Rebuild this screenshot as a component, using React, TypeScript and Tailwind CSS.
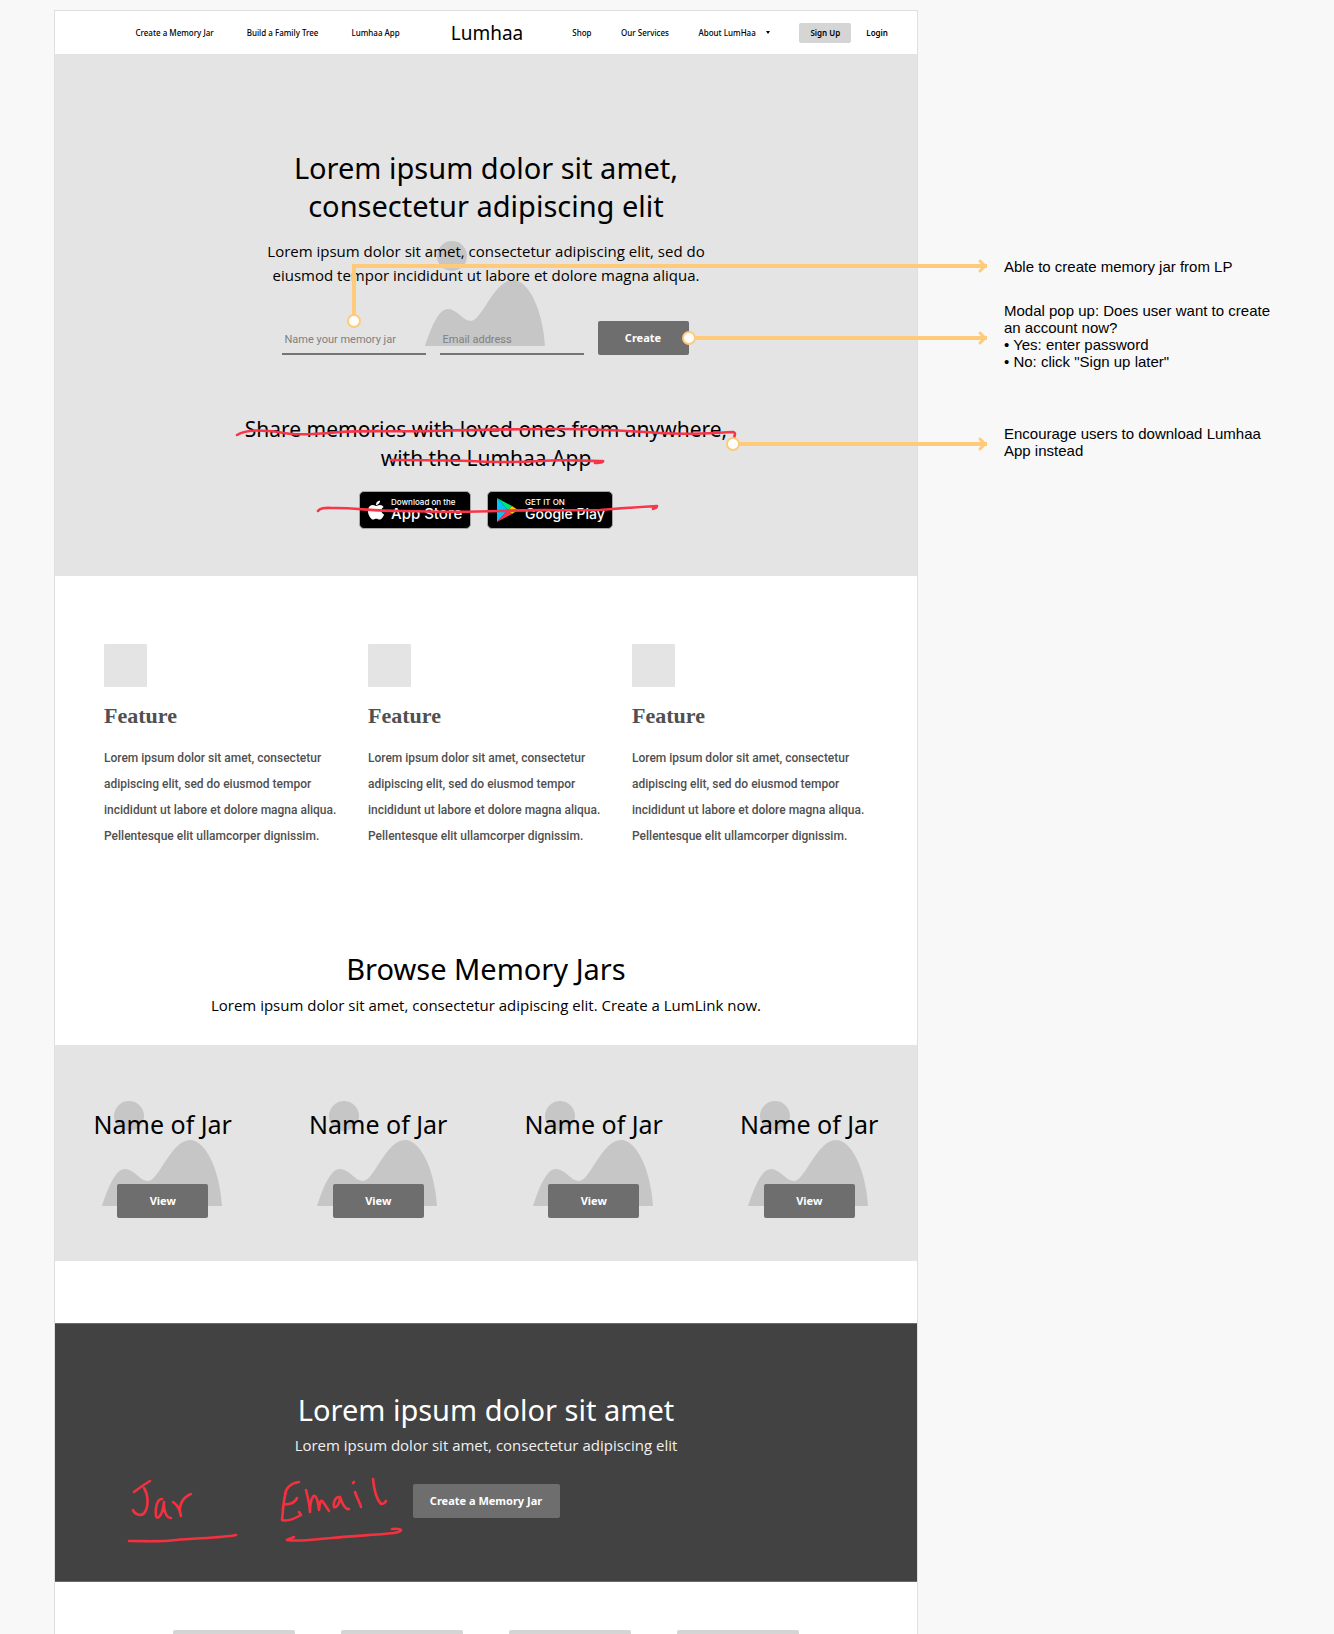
import React from "react";
import { FaApple } from "react-icons/fa";

function Placeholder({ className }: { className: string }) {
  return (
    <svg
      viewBox="0 0 120 105"
      className={`pointer-events-none absolute left-[calc(50%-61px)] h-[105px] w-[120px] fill-[#c6c6c6] ${className}`}
      aria-hidden="true"
    >
      <circle cx="27" cy="15" r="15" />
      <path d="M0 105C7 84 14 68 23 68C32 68 38 80 46 80C57 80 69 39 88 39C104 39 118 70 120 105Z" />
    </svg>
  );
}

function Dot({ className }: { className: string }) {
  return (
    <span
      className={`absolute size-[14px] rounded-full border-2 border-[#ffca79] bg-white ${className}`}
    />
  );
}

function Connector({ className }: { className: string }) {
  return (
    <span className={`absolute flex h-4 items-center ${className}`} aria-hidden="true">
      <span className="h-1 flex-1 bg-[#ffca79]" />
      <svg viewBox="0 0 8 16" className="-ml-2 h-4 w-2 overflow-visible">
        <path
          d="M1 3L6 8L1 13"
          fill="none"
          stroke="#ffca79"
          strokeWidth="3"
          strokeLinecap="round"
          strokeLinejoin="round"
        />
      </svg>
    </span>
  );
}

function PlayLogo() {
  return (
    <svg viewBox="0 0 22 24" className="h-6 w-[22px]" aria-hidden="true">
      <path d="M1 0L12 12L1 24Z" fill="#00c3ff" />
      <path d="M1 0L16 8L12 12Z" fill="#00e676" />
      <path d="M1 24L16 16L12 12Z" fill="#f93647" />
      <path d="M16 8L22 12L16 16L12 12Z" fill="#ffc400" />
    </svg>
  );
}

function Header() {
  return (
    <header className="flex h-[43px] items-center bg-white text-[8px] leading-3 font-medium text-black">
      <nav className="flex flex-1 justify-end gap-[33px] pr-[51px] pl-[29px] whitespace-nowrap">
        <a href="#jar">Create a Memory Jar</a>
        <a href="#tree">Build a Family Tree</a>
        <a href="#app">Lumhaa App</a>
      </nav>
      <a href="#home" className="text-[19px] leading-7 font-normal">
        Lumhaa
      </a>
      <nav className="flex flex-1 items-center justify-between pr-[29px] pl-[49px] whitespace-nowrap">
        <a href="#shop">Shop</a>
        <a href="#services">Our Services</a>
        <a href="#about" className="flex items-center gap-[10px]">
          About LumHaa
          <svg viewBox="0 0 4 3" className="h-[3px] w-1" aria-hidden="true">
            <path d="M0 0H4L2 3Z" />
          </svg>
        </a>
        <span className="flex items-center gap-[15px] font-semibold">
          <button type="button" className="h-5 w-[52px] rounded-[2px] bg-[#d5d5d5]">
            Sign Up
          </button>
          <a href="#login">Login</a>
        </span>
      </nav>
    </header>
  );
}

function Hero() {
  return (
    <section className="relative bg-[#e4e4e4] pt-[95px] pb-[47px] text-center text-black">
      <Placeholder className="top-[187px]" />
      <div className="relative">
        <h1 className="text-[29px] leading-[38px]">
          Lorem ipsum dolor sit amet,
          <br />
          consectetur adipiscing elit
        </h1>
        <p className="mt-[14px] font-['Open_Sans',sans-serif] text-[15px] leading-6">
          Lorem ipsum dolor sit amet, consectetur adipiscing elit, sed do
          <br />
          eiusmod tempor incididunt ut labore et dolore magna aliqua.
        </p>
        <form className="mt-[34px] flex justify-center gap-[14px] pr-[2px]">
          <input
            type="text"
            aria-label="Name your memory jar"
            placeholder="Name your memory jar"
            className="h-[34px] w-36 border-b-2 border-[#757575] px-[3px] pt-1 font-['Roboto',sans-serif] text-[11px] placeholder:text-[#808080]"
          />
          <input
            type="email"
            aria-label="Email address"
            placeholder="Email address"
            className="h-[34px] w-36 border-b-2 border-[#757575] px-[3px] pt-1 font-['Roboto',sans-serif] text-[11px] placeholder:text-[#808080]"
          />
          <button
            type="button"
            className="h-[34px] w-[91px] rounded-[2px] bg-[#6e6e6e] text-[11px] font-bold text-white"
          >
            Create
          </button>
        </form>
        <h2 className="mt-[60px] text-[21px] leading-[29px]">
          Share memories with loved ones from anywhere,
          <br />
          with the Lumhaa App
        </h2>
        <div className="mt-[18px] flex justify-center gap-4 text-left text-white">
          <a
            href="#app-store"
            className="flex h-[38px] w-28 items-center gap-1 rounded-[5px] border border-[#a6a6a6] bg-black pl-[5px] whitespace-nowrap"
          >
            <FaApple className="size-[22px]" />
            <span className="flex flex-col font-['Inter',sans-serif] font-medium">
              <span className="text-[8px] leading-2">Download on the</span>
              <span className="text-[15px] leading-4">App Store</span>
            </span>
          </a>
          <a
            href="#google-play"
            className="flex h-[38px] w-[126px] items-center gap-[7px] rounded-[5px] border border-[#a6a6a6] bg-black pl-2 whitespace-nowrap"
          >
            <PlayLogo />
            <span className="flex flex-col font-['Inter',sans-serif] font-medium">
              <span className="text-[8px] leading-2">GET IT ON</span>
              <span className="text-[14px] leading-4">Google Play</span>
            </span>
          </a>
        </div>
      </div>

      <svg
        viewBox="235 410 505 110"
        className="pointer-events-none absolute top-[356px] left-[calc(50%-251px)] h-[110px] w-[505px]"
        fill="none"
        stroke="#f9354a"
        strokeWidth="2.6"
        strokeLinecap="round"
        strokeLinejoin="round"
        aria-hidden="true"
      >
        <path d="M237 435C247 429 262 430 278 432C296 436 318 434 340 432C370 430 400 432 430 431C470 430 520 429 560 429C600 429 630 431 660 433C690 435 710 433 733 432C736 433 735 434 734 438" />
        <path d="M391 460C420 460 440 460 470 461C500 463 520 462 540 461C565 459 585 461 603 461C604 462 598 463 595 463" />
        <path d="M318 511C321 507 326 508 336 508C355 508 375 511 400 511C440 512 470 512 500 511C540 509 570 511 600 510C620 508 640 507 657 506C657 508 655 508 653 509" />
      </svg>

      <span className="absolute top-[210px] left-[calc(50%-134px)] h-[52px] w-1 bg-[#ffca79]" />
      <Connector className="top-[204px] right-[-70px] left-[calc(50%-134px)]" />
      <Dot className="top-[260px] left-[calc(50%-139px)]" />
      <Connector className="top-[276px] right-[-70px] left-[calc(50%+203px)]" />
      <Dot className="top-[277px] left-[calc(50%+196px)]" />
      <Connector className="top-[382px] right-[-70px] left-[calc(50%+247px)]" />
      <Dot className="top-[383px] left-[calc(50%+240px)]" />
    </section>
  );
}

function Features() {
  return (
    <section className="grid grid-cols-3 pt-[68px] pr-[21px] pl-[49px] text-[#505050]">
      {[1, 2, 3].map((n) => (
        <article key={n}>
          <div className="size-[43px] rounded-[1px] bg-[#e4e4e4]" />
          <h3 className="mt-4 font-['Liberation_Serif',serif] text-[22px] leading-[26px] font-bold">
            Feature
          </h3>
          <p className="mt-4 font-['Roboto',sans-serif] text-[12px] leading-[26px] font-medium">
            Lorem ipsum dolor sit amet, consectetur
            <br />
            adipiscing elit, sed do eiusmod tempor
            <br />
            incididunt ut labore et dolore magna aliqua.
            <br />
            Pellentesque elit ullamcorper dignissim.
          </p>
        </article>
      ))}
    </section>
  );
}

function Jars() {
  return (
    <section className="pt-[102px] text-center text-black">
      <h2 className="text-[29px] leading-9">Browse Memory Jars</h2>
      <p className="mt-[6px] font-['Open_Sans',sans-serif] text-[15px] leading-6">
        Lorem ipsum dolor sit amet, consectetur adipiscing elit. Create a LumLink now.
      </p>
      <div className="mt-7 grid grid-cols-4 bg-[#e4e4e4]">
        {[1, 2, 3, 4].map((n) => (
          <article key={n} className="relative pt-[63px] pb-[43px]">
            <Placeholder className="top-[56px]" />
            <div className="relative">
              <h3 className="text-[25px] leading-8">Name of Jar</h3>
              <button
                type="button"
                className="mx-auto mt-11 block h-[34px] w-[91px] rounded-[2px] bg-[#6e6e6e] text-[11px] font-bold text-white"
              >
                View
              </button>
            </div>
          </article>
        ))}
      </div>
    </section>
  );
}

function CallToAction() {
  return (
    <section className="relative mt-[62px] border-y border-[#6a6a6a] bg-[#424242] pt-[68px] pb-[63px] text-center text-white">
      <h2 className="text-[29px] leading-9">Lorem ipsum dolor sit amet</h2>
      <p className="mt-[5px] font-['Open_Sans',sans-serif] text-[15px] leading-6 text-[#f0f0f0]">
        Lorem ipsum dolor sit amet, consectetur adipiscing elit
      </p>
      <button
        type="button"
        className="mt-[27px] h-[34px] w-[147px] rounded-[2px] bg-[#6e6e6e] text-[11px] font-bold"
      >
        Create a Memory Jar
      </button>
      <svg
        viewBox="0 0 280 72"
        className="pointer-events-none absolute top-[151px] left-[calc(50%-360px)] h-[72px] w-[280px]"
        fill="none"
        stroke="#f5303f"
        strokeWidth="2.6"
        strokeLinecap="round"
        strokeLinejoin="round"
        role="img"
        aria-label="Handwritten note: Jar, Email"
      >
        <path d="M8 17C13 13 19 9 24 6M18 13C22 19 23 30 19 37C16 42 9 40 7 35" />
        <path d="M36 24C31 24 29 33 30 41C31 46 37 40 38 27C37 34 40 43 45 43M47 27C50 29 54 34 55 41C52 33 55 23 65 19" />
        <path d="M3 66C20 66 35 67 50 65C70 63 95 63 110 60" />
        <path d="M173 7C165 8 160 13 159 19M171 23C169 28 163 30 158 29M160 17C157 26 157 37 156 45C163 47 170 43 175 40L173 37" />
        <path d="M180 15C182 23 184 31 184 37C184 28 186 20 189 21C192 23 192 30 193 35C194 28 194 25 196 26C199 29 201 33 203 36" />
        <path d="M213 22C209 22 207 28 208 32C211 33 214 28 214 22C216 28 219 35 223 34M229 17C231 23 234 28 235 32M227 8L228 7M247 4C248 14 251 25 255 29C258 29 259 28 260 26" />
        <path d="M168 62L161 65C175 67 190 64 205 63C225 61 250 60 268 58C279 56 276 53 266 54" />
      </svg>
    </section>
  );
}

export default function App() {
  return (
    <div className="flex min-h-screen bg-[#f8f8f8] pt-[10px] pl-[54px] font-['Noto_Sans','Open_Sans',sans-serif]">
      <main className="min-w-0 flex-1 border-x border-t border-[#dfdfdf] bg-white">
        <Header />
        <Hero />
        <Features />
        <Jars />
        <CallToAction />
        <footer className="mt-12 flex justify-center gap-[46px]">
          {[1, 2, 3, 4].map((n) => (
            <div key={n} className="h-1 w-[122px] rounded-t-[2px] bg-[#d5d5d5]" />
          ))}
        </footer>
      </main>
      <aside className="w-[416px] shrink-0 pt-[248px] pl-[86px] font-['Liberation_Sans',sans-serif] text-[15px] leading-[17px] font-medium text-black">
        <p>Able to create memory jar from LP</p>
        <div className="mt-[27px]">
          <p>
            Modal pop up: Does user want to create
            <br />
            an account now?
          </p>
          <p>• Yes: enter password</p>
          <p>• No: click "Sign up later"</p>
        </div>
        <p className="mt-[55px]">
          Encourage users to download Lumhaa
          <br />
          App instead
        </p>
      </aside>
    </div>
  );
}
